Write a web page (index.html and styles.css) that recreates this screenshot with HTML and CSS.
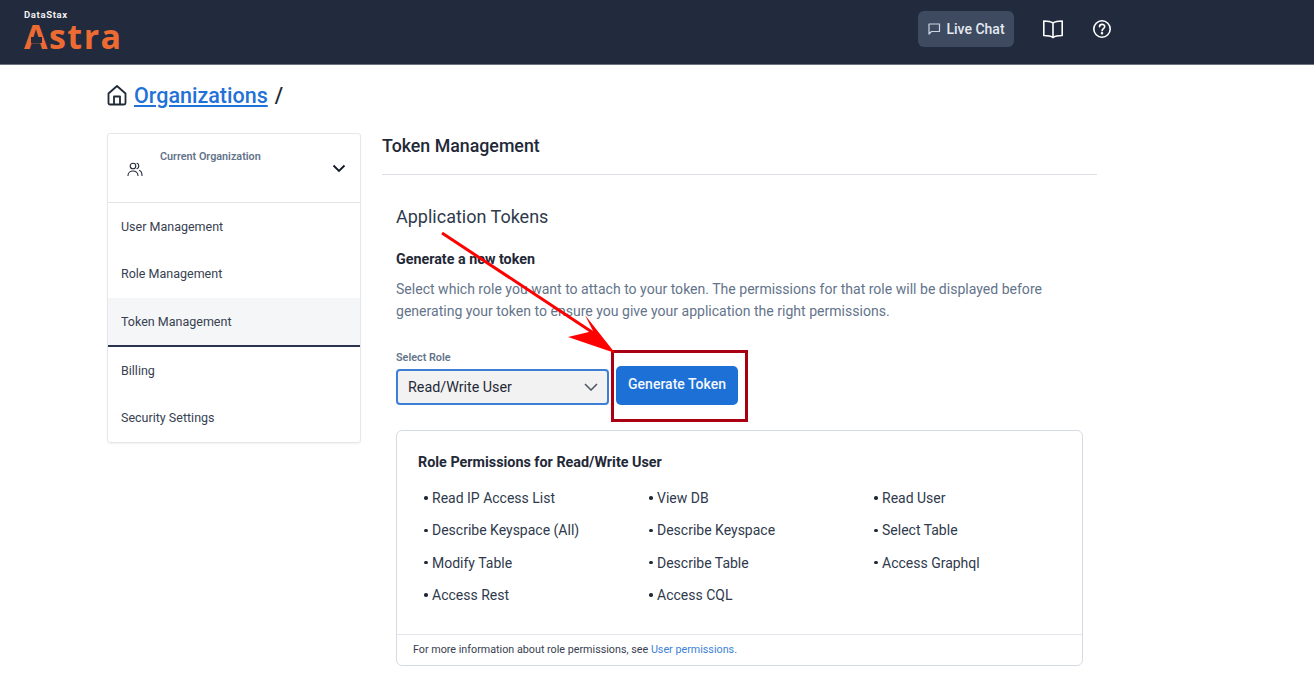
FILE: index.html
```html
<!DOCTYPE html>
<html lang="en">
<head>
  <meta charset="UTF-8">
  <title>Token Management</title>
  <link rel="stylesheet" href="styles.css">
</head>
<body>
  <header class="topbar">
    <div class="logo">
      <span class="logo-small">DataStax</span>
      <span class="logo-big"><span class="logo-a">A</span>stra</span>
    </div>
    <div class="top-actions">
      <button class="chat-btn">
        <svg width="14" height="14" viewBox="0 0 14 14" fill="none" stroke="#cbd5e1" stroke-width="1.2"><path d="M2 2h10.500v7.500H4.500L2 12z" stroke-linejoin="round"/></svg>
        Live Chat
      </button>
      <svg class="book-icon" width="22" height="20" viewBox="0 0 22 20" fill="none" stroke="#fff" stroke-width="1.600"><path d="M11 4C9 2.600 6 2 1.800 2v14.500c4.200 0 7.200.5 9.200 2 2-1.500 5-2 9.200-2V2C16 2 13 2.600 11 4zM11 4v14.500" stroke-linejoin="round"/></svg>
      <svg width="20" height="20" viewBox="0 0 20 20" fill="none" stroke="#fff" stroke-width="1.600"><circle cx="10" cy="10" r="8.200"/><path d="M7.500 7.800c0-3.200 5.200-3.200 5.200-.2 0 2-2.500 2-2.600 4.200" stroke-linecap="round"/><circle cx="10" cy="14.300" r=".5" fill="#fff"/></svg>
    </div>
  </header>

  <div class="page">
    <nav class="crumbs">
      <svg width="20" height="22" viewBox="0 0 20 22" fill="none" stroke="#1f2937" stroke-width="1.800" stroke-linejoin="round"><path d="M1.500 9.500 10 2l8.500 7.500V19a1.500 1.500 0 0 1-1.500 1.500H3A1.500 1.500 0 0 1 1.500 19z"/><path d="M7 20.500V12.500h6v8"/></svg>
      <a href="#" class="crumb-link">Organizations</a>
      <span class="crumb-sep">/</span>
    </nav>

    <div class="columns">
      <aside class="side">
        <div class="org">
          <svg class="org-icon" width="16" height="15" viewBox="0 0 16 15" fill="none" stroke="#1f2937" stroke-width="1.100" stroke-linecap="round"><circle cx="6" cy="4" r="2.800"/><path d="M1 13.500c0-6 10-6 10 0M10 1.300c2.400.4 2.400 4.900 0 5.300M12.500 8.500c1.600.6 2.500 2.600 2.500 5"/></svg>
          <span class="org-label">Current Organization</span>
          <svg class="org-chev" width="14" height="9" viewBox="0 0 14 9" fill="none" stroke="#111827" stroke-width="1.800"><path d="M1.500 1.500 7 7l5.500-5.500"/></svg>
        </div>
        <ul class="side-list">
          <li>User Management</li>
          <li>Role Management</li>
          <li class="active">Token Management</li>
          <li>Billing</li>
          <li>Security Settings</li>
        </ul>
      </aside>

      <main class="content">
        <h1 class="title">Token Management</h1>
        <section class="section">
          <h2 class="sub">Application Tokens</h2>
          <h3 class="gen">Generate a new token</h3>
          <p class="desc">Select which role you want to attach to your token. The permissions for that role will be displayed before generating your token to ensure you give your application the right permissions.</p>

          <div class="form-row">
            <div class="field">
              <label class="field-label">Select Role</label>
              <div class="select">
                Read/Write User
                <svg width="14" height="8" viewBox="0 0 14 8" fill="none" stroke="#4b5563" stroke-width="1.500"><path d="M1 1l6 6 6-6"/></svg>
              </div>
            </div>
            <button class="gen-btn">Generate Token</button>
          </div>

          <div class="card">
            <div class="card-body">
              <h4 class="card-title">Role Permissions for Read/Write User</h4>
              <ul class="perms">
                <li>Read IP Access List</li>
                <li>View DB</li>
                <li>Read User</li>
                <li>Describe Keyspace (All)</li>
                <li>Describe Keyspace</li>
                <li>Select Table</li>
                <li>Modify Table</li>
                <li>Describe Table</li>
                <li>Access Graphql</li>
                <li>Access Rest</li>
                <li>Access CQL</li>
              </ul>
            </div>
            <div class="card-foot">For more information about role permissions, see <a href="#">User permissions.</a></div>
          </div>
        </section>
      </main>
    </div>
  </div>

  <!-- screenshot annotations -->
  <div class="mark-box"></div>
  <svg class="mark-arrow" width="1314" height="673" viewBox="0 0 1314 673">
    <path d="M442 233 598 336" stroke="#f00" stroke-width="3" fill="none"/>
    <path d="M615 353 585 315 593 331 568 337z" fill="#f00"/>
  </svg>
</body>
</html>
```

FILE: styles.css
```css
* {
  box-sizing: border-box;
}
html, body {
  margin: 0;
  height: 673px;
  overflow: hidden;
}
body {
  position: relative;
  font-family: Roboto, "Liberation Sans", sans-serif;
  color: #1f2937;
  background: #fff;
}
ul {
  list-style: none;
  margin: 0;
  padding: 0;
}
h1, h2, h3, h4, p {
  margin: 0;
}

/* top bar */
.topbar {
  height: 65px;
  background: #212b3d;
  border-bottom: 1px solid #6b7280;
  display: flex;
  justify-content: space-between;
  padding: 0 202px 0 24px;
}
.logo {
  display: flex;
  flex-direction: column;
  padding-top: 8px;
}
.logo-small {
  font-size: 9.500px;
  line-height: 13px;
  font-weight: 700;
  color: #f1f1f1;
  letter-spacing: .65px;
}
.logo-big {
  font-family: "Open Sans", sans-serif;
  font-size: 34px;
  line-height: 30px;
  font-weight: 700;
  color: #ed6b32;
  letter-spacing: 1.500px;
}
/* the logo's A has no crossbar */
.logo-a {
  position: relative;
}
.logo-a::after {
  content: "";
  position: absolute;
  left: 7px;
  top: 24px;
  width: 11px;
  height: 6px;
  background: #212b3d;
}
.top-actions {
  display: flex;
  align-items: center;
  padding-bottom: 7px;
}
.chat-btn {
  width: 96px;
  height: 36px;
  margin-right: 28px;
  padding: 0;
  display: flex;
  align-items: center;
  justify-content: center;
  gap: 5px;
  background: #3d4a60;
  color: #e5e9f0;
  border: none;
  border-radius: 6px;
  font: 500 14px Roboto, sans-serif;
}
.book-icon {
  margin-right: 28px;
}

/* page */
.page {
  padding: 18px 217px 0 107px;
}
.crumbs {
  height: 24px;
  display: flex;
  align-items: center;
  gap: 7px;
}
.crumb-link {
  font-size: 21.500px;
  font-weight: 500;
  color: #1f72d8;
}
.crumb-sep {
  font-size: 21.500px;
  font-weight: 500;
}
.columns {
  display: flex;
  margin-top: 26px;
  gap: 21px;
}

/* sidebar */
.side {
  width: 254px;
  height: 310px;
  flex: none;
  border: 1px solid #e5e7eb;
  border-radius: 3px;
  box-shadow: 0 1px 2px rgba(0,0,0,.06);
}
.org {
  height: 69px;
  display: flex;
  align-items: flex-start;
  border-bottom: 1px solid #e2e4e8;
  padding: 16px 14px 0 19px;
}
.org-icon {
  margin-top: 12px;
}
.org-label {
  margin-left: 17px;
  font-size: 10.800px;
  line-height: 14px;
  font-weight: 600;
  color: #64748b;
  flex: 1;
}
.org-chev {
  margin-top: 14px;
}
.side-list li {
  height: 47.500px;
  display: flex;
  align-items: center;
  padding: 0 0 1px 13px;
  font-size: 12.500px;
  color: #374151;
}
.side-list .active {
  height: 49px;
  background: #f5f6f8;
  border-bottom: 2px solid #2b3350;
}

/* main */
.content {
  flex: 1;
  min-width: 0;
}
.title {
  font-size: 17.800px;
  line-height: 24px;
  font-weight: 500;
  padding-top: 1px;
  padding-bottom: 16px;
  border-bottom: 1px solid #dcdfe4;
}
.section {
  padding: 31px 14px 0;
}
.sub {
  font-size: 18px;
  line-height: 22px;
  font-weight: 400;
  color: #2f3a4c;
}
.gen {
  margin-top: 21px;
  font-size: 14.300px;
  line-height: 20px;
  font-weight: 700;
}
.desc {
  margin-top: 9px;
  font-size: 14.050px;
  line-height: 22px;
  color: #64748b;
}
.form-row {
  display: flex;
  align-items: flex-end;
  gap: 7px;
  margin-top: 30px;
}
.field-label {
  display: block;
  font-size: 10.800px;
  line-height: 12px;
  font-weight: 600;
  color: #64748b;
  margin-bottom: 5px;
}
.select {
  width: 213px;
  height: 36px;
  display: flex;
  align-items: center;
  justify-content: space-between;
  padding: 0 9px 0 10px;
  background: #f2f2f2;
  border: 2px solid #3d7fd6;
  border-radius: 4px;
  font-size: 14.300px;
  color: #1f2937;
}
.gen-btn {
  width: 122px;
  height: 39px;
  padding: 0 0 3px;
  background: #1d70d6;
  color: #f4f7fb;
  border: none;
  border-radius: 5px;
  font: 500 14px Roboto, sans-serif;
}
.card {
  margin-top: 25px;
  height: 236px;
  border: 1px solid #d6dbe3;
  border-radius: 6px;
  display: flex;
  flex-direction: column;
}
.card-body {
  flex: 1;
  padding: 23px 21px 0;
}
.card-title {
  font-size: 14.350px;
  line-height: 18px;
  font-weight: 700;
}
.perms {
  display: grid;
  grid-template-columns: repeat(3, 225px);
  grid-auto-rows: 32.300px;
  margin-top: 10px;
  padding-left: 6px;
}
.perms li {
  display: flex;
  align-items: center;
  font-size: 14px;
  color: #2f3a4c;
}
.perms li::before {
  content: "";
  width: 3.500px;
  height: 3.500px;
  border-radius: 50%;
  background: #1f2937;
  margin-right: 4.500px;
}
.card-foot {
  height: 31px;
  border-top: 1px solid #e2e5ea;
  padding: 8px 15px 0 16px;
  font-size: 10.750px;
  line-height: 14px;
  color: #374151;
}
.card-foot a {
  color: #3b82d6;
  text-decoration: none;
}

/* annotations over the screenshot */
.mark-box {
  position: absolute;
  left: 611px;
  top: 350px;
  width: 137px;
  height: 72px;
  border: 3px solid #a80012;
}
.mark-arrow {
  position: absolute;
  left: 0;
  top: 0;
  pointer-events: none;
}
```
